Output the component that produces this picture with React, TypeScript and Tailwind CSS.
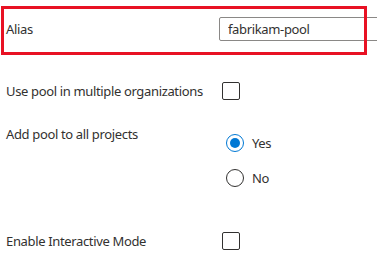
import React from 'react';

const textFont = { fontFamily: '"Noto Sans", "Open Sans", sans-serif' };

const Checkbox = () => (
  <div className="ml-[3px] h-[18px] w-[18px] shrink-0 rounded-[2px] border border-[#323130] bg-white" />
);

const Radio = ({ checked, label }: { checked?: boolean; label: string }) => (
  <div className="flex h-[18px] items-center">
    <div
      className={
        checked
          ? 'flex h-[18px] w-[18px] items-center justify-center rounded-full border border-[#0078d4]'
          : 'h-[18px] w-[18px] rounded-full border border-[#323130]'
      }
    >
      {checked && <div className="h-[10px] w-[10px] rounded-full bg-[#0078d4]" />}
    </div>
    <span className="ml-[8px] text-[13px] leading-[20px] tracking-[-0.35px] text-[#323130]">{label}</span>
  </div>
);

export default function App() {
  return (
    <div
      className="relative h-[272px] w-[377px] overflow-hidden bg-white text-[13px] tracking-[-0.35px] text-[#323130]"
      style={textFont}
    >
      {/* alias */}
      <div className="mt-[17px] flex h-[24px] items-center">
        <div className="w-[219px] shrink-0 whitespace-nowrap pl-[6px] leading-[20px]">Alias</div>
        <input
          readOnly
          value="fabrikam-pool"
          className="h-[24px] w-[180px] shrink-0 rounded-[2px] border border-[#8a8886] pl-[8px] text-[13px] tracking-[-0.35px] text-[#323130] outline-none"
          style={textFont}
        />
      </div>

      {/* highlight */}
      <div className="pointer-events-none absolute left-[1px] top-[6px] h-[49px] w-[366px] border-[3px] border-[#e81123]" />

      <div className="mt-[41px] flex h-[18px] items-center">
        <div className="w-[219px] shrink-0 whitespace-nowrap pl-[6px] leading-[20px]">
          Use pool in multiple organizations
        </div>
        <Checkbox />
      </div>

      <div className="mt-[24px] flex items-start">
        <div className="w-[226px] shrink-0 whitespace-nowrap pl-[6px] leading-[20px]">
          Add pool to all projects
        </div>
        <div className="mt-[10px] flex flex-col gap-[17px]">
          <Radio checked label="Yes" />
          <Radio label="No" />
        </div>
      </div>

      <div className="mt-[45px] flex h-[18px] items-center">
        <div className="w-[219px] shrink-0 whitespace-nowrap pl-[6px] leading-[20px]">
          Enable Interactive Mode
        </div>
        <Checkbox />
      </div>
    </div>
  );
}
